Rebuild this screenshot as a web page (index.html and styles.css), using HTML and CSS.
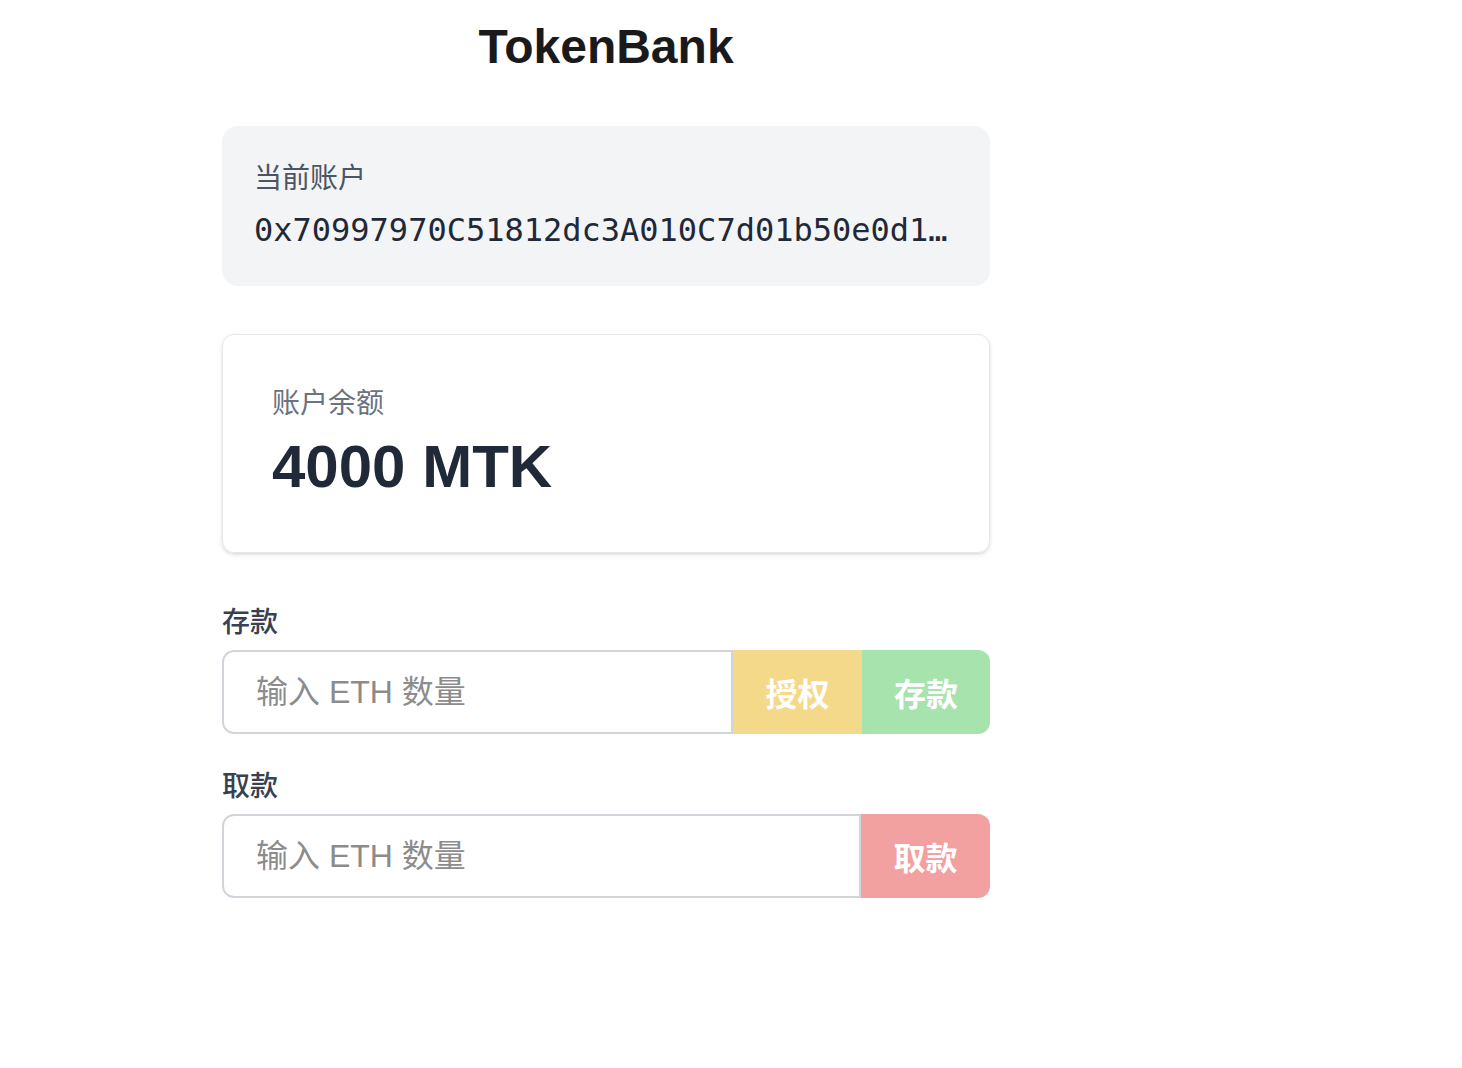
FILE: index.html
```html
<!DOCTYPE html>
<html lang="zh-CN">
<head>
<meta charset="utf-8">
<title>TokenBank</title>
<link rel="stylesheet" href="styles.css">
</head>
<body>
<main class="app">
  <h1 class="title">TokenBank</h1>

  <section class="account-card">
    <div class="account-label">当前账户</div>
    <div class="account-address">0x70997970C51812dc3A010C7d01b50e0d17dc79C8</div>
  </section>

  <section class="balance-card">
    <div class="balance-label">账户余额</div>
    <div class="balance-value">4000 MTK</div>
  </section>

  <section class="action">
    <div class="action-label">存款</div>
    <div class="action-row">
      <input class="amount-input" type="text" placeholder="输入 ETH 数量">
      <button class="btn btn-approve" type="button">授权</button>
      <button class="btn btn-deposit" type="button">存款</button>
    </div>
  </section>

  <section class="action action-withdraw">
    <div class="action-label">取款</div>
    <div class="action-row">
      <input class="amount-input" type="text" placeholder="输入 ETH 数量">
      <button class="btn btn-withdraw" type="button">取款</button>
    </div>
  </section>
</main>
</body>
</html>
```

FILE: styles.css
```css
* {
  box-sizing: border-box;
}

html, body {
  margin: 0;
  padding: 0;
  background: #ffffff;
}

body {
  font-family: "Liberation Sans", "Noto Sans CJK SC", sans-serif;
  color: #1f2937;
}

.app {
  width: 768px;
  margin-left: 222px;
}

.title {
  margin: 0;
  padding-top: 19px;
  font-size: 48px;
  line-height: 56px;
  font-weight: 700;
  text-align: center;
  color: #1a1a1a;
}

.account-card {
  margin-top: 51px;
  background: #f3f4f6;
  border-radius: 16px;
  padding: 32px 32px 32px 32px;
}

.account-label {
  font-size: 28px;
  line-height: 42px;
  color: #4b5563;
}

.account-address {
  margin-top: 6px;
  font-family: "DejaVu Sans Mono", "Liberation Mono", monospace;
  font-size: 32px;
  line-height: 48px;
  color: #1f2937;
  white-space: nowrap;
  overflow: hidden;
  text-overflow: ellipsis;
}

.balance-card {
  margin-top: 48px;
  border: 1px solid #e5e7eb;
  border-radius: 12px;
  box-shadow: 0 2px 4px rgba(0, 0, 0, 0.1), 0 1px 2px rgba(0, 0, 0, 0.06);
  padding: 48px 49px 49px 49px;
}

.balance-label {
  font-size: 28px;
  line-height: 42px;
  color: #6b7280;
}

.balance-value {
  margin-top: 6px;
  font-size: 60px;
  line-height: 72px;
  font-weight: 700;
  color: #1f2937;
}

.action {
  margin-top: 49px;
}

.action-withdraw {
  margin-top: 32px;
}

.action-label {
  font-size: 28px;
  line-height: 42px;
  font-weight: 500;
  color: #374151;
}

.action-row {
  margin-top: 6px;
  display: flex;
  height: 84px;
}

.amount-input {
  flex: 1;
  min-width: 0;
  height: 84px;
  border: 2px solid #d1d5db;
  border-radius: 12px 0 0 12px;
  padding: 0 32px;
  font-family: "Liberation Sans", "Noto Sans CJK SC", sans-serif;
  font-size: 32px;
  color: #1f2937;
  background: #ffffff;
  outline: none;
}

.amount-input::placeholder {
  color: #8c8c8c;
}

.btn {
  height: 84px;
  border: none;
  padding: 0 32px;
  font-family: "Liberation Sans", "Noto Sans CJK SC", sans-serif;
  font-size: 32px;
  font-weight: 700;
  color: #ffffff;
  cursor: default;
}

.btn-approve {
  width: 129px;
  background: #f4d98a;
}

.btn-deposit {
  width: 128px;
  background: #a7e3ad;
  border-radius: 0 12px 12px 0;
}

.btn-withdraw {
  width: 129px;
  background: #f2a0a0;
  border-radius: 0 12px 12px 0;
}
```
